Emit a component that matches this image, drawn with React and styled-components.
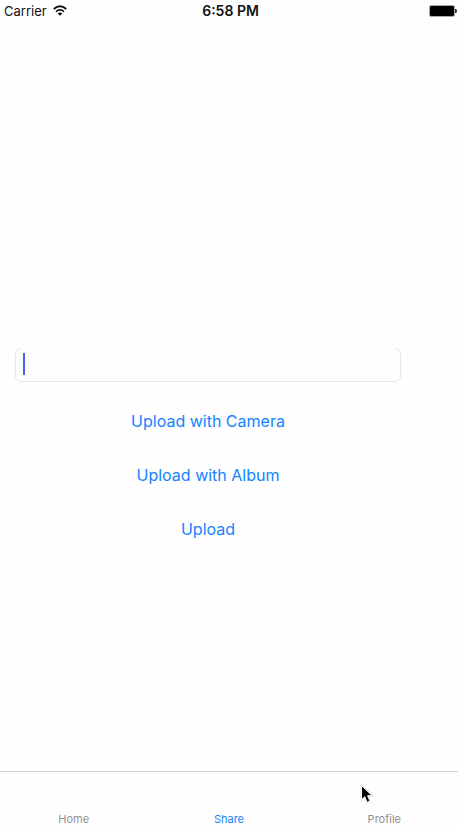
import React, { useState } from "react";
import styled, { createGlobalStyle } from "styled-components";

const GlobalStyle = createGlobalStyle`
  * { box-sizing: border-box; }
  body {
    margin: 0;
    background: #fefefe;
    font-family: Inter, "Liberation Sans", sans-serif;
    overflow-x: hidden;
  }
  button, input { font: inherit; }
`;

const Screen = styled.div`
  position: relative;
  min-height: 100vh;
  display: flex;
  flex-direction: column;
  background: #fefefe;
`;

const StatusBar = styled.header`
  display: grid;
  grid-template-columns: 1fr auto 1fr;
  align-items: center;
  height: 22px;
  padding: 0 1px 0 4px;
  font-size: 13px;
  line-height: 22px;
  color: #111;
`;

const Carrier = styled.div`
  display: flex;
  align-items: center;
  gap: 6px;
`;

const Clock = styled.time`
  font-size: 14px;
  font-weight: 600;
`;

const BatterySlot = styled.div`
  display: flex;
  justify-content: flex-end;
`;

const Form = styled.form`
  flex: 1;
  display: flex;
  flex-direction: column;
  justify-content: center;
  align-items: stretch;
  gap: 24px;
  padding: 98px 57px 0 15px;
`;

const Field = styled.div`
  position: relative;
  height: 34px;

  &::before {
    content: "";
    position: absolute;
    top: 0;
    left: 6px;
    right: 6px;
    height: 1px;
    background: #fefefe;
  }
`;

const TextInput = styled.input`
  display: block;
  width: 100%;
  height: 100%;
  padding: 0 8px;
  border: 1px solid #e6e6e6;
  border-radius: 6px;
  outline: none;
  background: transparent;
  font-size: 16px;
  caret-color: #4169ec;
`;

const Caret = styled.span`
  position: absolute;
  top: 5px;
  left: 8px;
  width: 2px;
  height: 22px;
  background: #4169ec;
`;

const Action = styled.button`
  align-self: center;
  height: 30px;
  padding: 0;
  border: 0;
  background: none;
  color: #1583ff;
  font-size: 16px;
  line-height: 30px;
`;

const TabBar = styled.nav`
  display: flex;
  height: 55px;
  padding: 0;
  border-top: 1px solid #d2d2d2;
`;

const TabList = styled.div`
  flex: 1;
  display: flex;
  margin: 0 -4px;
`;

const Tab = styled.a`
  flex: 1;
  display: flex;
  align-items: flex-end;
  justify-content: center;
  color: ${(p) => (p.$active ? "#1583ff" : "#929292")};
  font-size: 11px;
  line-height: 14px;
  text-decoration: none;
`;

const Pointer = styled.svg`
  position: absolute;
  right: 84px;
  bottom: 21px;
`;

function WifiIcon() {
  return (
    <svg width="14" height="12" viewBox="0 0 14 12" aria-hidden="true">
      <path d="M.8 4Q7 -1.4 13.2 4" fill="none" stroke="#111" strokeWidth="2" />
      <path d="M3 6.6Q7 3.2 11 6.6" fill="none" stroke="#111" strokeWidth="1.8" />
      <path d="M4.7 8.4Q7 6.4 9.3 8.4L7 10.8Z" fill="#111" />
    </svg>
  );
}

function BatteryIcon() {
  return (
    <svg width="28" height="12" viewBox="0 0 28 12" aria-label="Battery full">
      <rect x=".5" y=".5" width="25" height="11" rx="1.5" fill="#fff" stroke="#aaa" />
      <rect x="1" y="1" width="24" height="10" rx="1" fill="#000" />
      <path d="M26.2 4h.6q1 0 1 2t-1 2h-.6z" fill="#000" />
    </svg>
  );
}

export default function App() {
  const [caption, setCaption] = useState("");
  return (
    <>
      <GlobalStyle />
      <Screen>
        <StatusBar>
          <Carrier>
            Carrier
            <WifiIcon />
          </Carrier>
          <Clock>6:58 PM</Clock>
          <BatterySlot>
            <BatteryIcon />
          </BatterySlot>
        </StatusBar>
        <Form onSubmit={(e) => e.preventDefault()}>
          <Field>
            <TextInput
              aria-label="Caption"
              value={caption}
              onChange={(e) => setCaption(e.target.value)}
            />
            {caption === "" && <Caret />}
          </Field>
          <Action type="button">Upload with Camera</Action>
          <Action type="button">Upload with Album</Action>
          <Action type="submit">Upload</Action>
        </Form>
        <TabBar>
          <TabList>
            <Tab href="#home">Home</Tab>
            <Tab href="#share" $active aria-current="page">Share</Tab>
            <Tab href="#profile">Profile</Tab>
          </TabList>
        </TabBar>
        <Pointer width="14" height="21" viewBox="0 0 14 21" aria-hidden="true">
          <path
            d="M1.5 1.5v14.2l3.2-3 2.4 5.6 2.9-1.2-2.4-5.4h4.6z"
            fill="#000"
            stroke="#bbb"
            strokeWidth="2"
            strokeLinejoin="round"
            opacity=".5"
          />
          <path
            d="M1.5 1.5v14.2l3.2-3 2.4 5.6 2.9-1.2-2.4-5.4h4.6z"
            fill="#000"
            stroke="#fff"
            strokeWidth="1"
          />
        </Pointer>
      </Screen>
    </>
  );
}
